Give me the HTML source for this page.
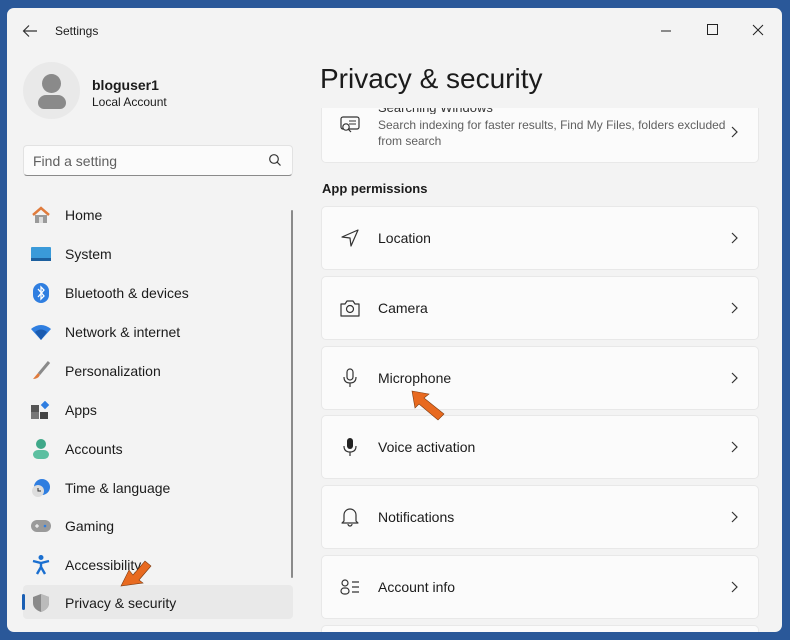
<!DOCTYPE html>
<html><head><meta charset="utf-8"><style>
*{margin:0;padding:0;box-sizing:border-box}
body{width:790px;height:640px;background:#2a5899;font-family:"Liberation Sans",sans-serif;overflow:hidden;position:relative}
.win{position:absolute;left:7px;top:8px;width:775px;height:624px;background:#f3f3f3;border-radius:7px;overflow:hidden}
.abs{position:absolute}
.t{color:#1b1b1b}
.nav{position:absolute;left:16px;height:35px;width:270px;display:flex;align-items:center;font-size:14px;color:#1b1b1b}
.nav .ic{width:20px;height:20px;margin-left:8px;margin-right:14px;display:flex;align-items:center;justify-content:center}
.card{position:absolute;left:314px;width:438px;height:64px;background:#fbfbfb;border:1px solid #e8e8e8;border-radius:5px;display:flex;align-items:center;font-size:14px;color:#1b1b1b}
.card .ic{width:56px;display:flex;justify-content:center}
.chev{position:absolute;right:17px;top:50%;margin-top:-7px;width:14px;height:14px}
</style></head><body>
<div class="win">
<svg class="abs" style="left:15px;top:16px" width="16" height="14" viewBox="0 0 16 14"><path d="M15 7H2M7 1.5L1.5 7 7 12.5" stroke="#333" stroke-width="1.2" fill="none"/></svg>
<div class="abs t" style="left:48px;top:16px;font-size:12px">Settings</div>
<svg class="abs" style="left:634px;top:10px" width="140" height="22"><path d="M20 13h10" stroke="#222"/><rect x="66.5" y="6.5" width="10" height="10" fill="none" stroke="#222"/><path d="M112 7l10 10M122 7l-10 10" stroke="#222"/></svg>
<div class="abs" style="left:16px;top:54px;width:57px;height:57px;border-radius:50%;background:#e9e9e9"></div>
<div class="abs" style="left:35px;top:66px;width:19px;height:19px;border-radius:50%;background:#8a8a8a"></div>
<div class="abs" style="left:31px;top:87px;width:28px;height:14px;border-radius:8px 8px 6px 6px;background:#8a8a8a"></div>
<div class="abs t" style="left:85px;top:69px;font-size:14px;font-weight:bold">bloguser1</div>
<div class="abs t" style="left:85px;top:87px;font-size:12px">Local Account</div>
<div class="abs" style="left:16px;top:137px;width:270px;height:31px;background:#fbfbfb;border:1px solid #e2e2e2;border-bottom:1px solid #8a8a8a;border-radius:4px"></div>
<div class="abs" style="left:26px;top:145px;font-size:14px;color:#5f5f5f">Find a setting</div>
<svg class="abs" style="left:261px;top:145px" width="14" height="14"><circle cx="6" cy="6" r="4.3" stroke="#333" fill="none" stroke-width="1.2"/><path d="M9 9l3.5 3.5" stroke="#333" stroke-width="1.2"/></svg>
<div class="abs" style="left:284px;top:202px;width:2px;height:368px;background:#8a8a8a;border-radius:1px"></div>

<div class="nav" style="top:189px"><span class="ic"><svg width="20" height="18"><path d="M2 9L10 2l8 7" stroke="#e07b3c" stroke-width="2.5" fill="none"/><path d="M4 9v8h12V9" fill="#9a9a9a"/><rect x="8" y="11" width="4" height="6" fill="#ddd"/></svg></span>Home</div>
<div class="nav" style="top:228px"><span class="ic"><svg width="20" height="14"><rect width="20" height="14" rx="1" fill="#3a9ad9"/><rect y="11" width="20" height="3" fill="#1c5f9e"/></svg></span>System</div>
<div class="nav" style="top:267px"><span class="ic"><svg width="16" height="20"><rect width="16" height="20" rx="8" fill="#2f7ee0"/><path d="M5 6l6 7-3 3V4l3 3-6 7" stroke="#fff" stroke-width="1.3" fill="none"/></svg></span>Bluetooth &amp; devices</div>
<div class="nav" style="top:306px"><span class="ic"><svg width="20" height="16"><path d="M0 5Q10-3 20 5L10 16z" fill="#2f7ee0"/><path d="M4 8Q10 3 16 8L10 16z" fill="#1a5bb0"/></svg></span>Network &amp; internet</div>
<div class="nav" style="top:345px"><span class="ic"><svg width="20" height="20"><path d="M18 1L8 13" stroke="#8a8a8a" stroke-width="3"/><path d="M7 12l-5 6q5 0 7-4z" fill="#e07b3c"/></svg></span>Personalization</div>
<div class="nav" style="top:384px"><span class="ic"><svg width="20" height="18"><rect x="0" y="4" width="8" height="7" fill="#555"/><rect x="0" y="11" width="8" height="7" fill="#777"/><rect x="9" y="11" width="8" height="7" fill="#444"/><rect x="11" y="1" width="6" height="6" fill="#2f7ee0" transform="rotate(45 14 4)"/></svg></span>Apps</div>
<div class="nav" style="top:423px"><span class="ic"><svg width="18" height="20"><circle cx="9" cy="5" r="5" fill="#3fa889"/><rect x="1" y="11" width="16" height="9" rx="5" fill="#5cbfa0"/></svg></span>Accounts</div>
<div class="nav" style="top:462px"><span class="ic"><svg width="20" height="20"><circle cx="11" cy="9" r="8" fill="#2f7ee0"/><circle cx="7" cy="13" r="6" fill="#ddd"/><path d="M7 10v3h3" stroke="#333" fill="none"/></svg></span>Time &amp; language</div>
<div class="nav" style="top:500px"><span class="ic"><svg width="20" height="12"><rect width="20" height="12" rx="6" fill="#9a9a9a"/><path d="M4 6h4M6 4v4" stroke="#fff"/><circle cx="14" cy="6" r="1.3" fill="#2f7ee0"/></svg></span>Gaming</div>
<div class="nav" style="top:539px"><span class="ic"><svg width="18" height="20"><circle cx="9" cy="2.5" r="2.5" fill="#1a6fd0"/><path d="M1 6l8 2 8-2M9 8v4l-4 7M9 12l4 7" stroke="#1a6fd0" stroke-width="2.4" fill="none"/></svg></span>Accessibility</div>
<div class="abs" style="left:16px;top:577px;width:270px;height:34px;background:#e9e9e9;border-radius:4px"></div>
<div class="abs" style="left:15px;top:586px;width:3px;height:16px;background:#1a5fb4;border-radius:2px"></div>
<div class="nav" style="top:577px"><span class="ic"><svg width="18" height="20"><path d="M9 1l8 3v6q0 6-8 9-8-3-8-9V4z" fill="#8a8a8a"/><path d="M9 1l8 3v6q0 6-8 9z" fill="#bbb"/></svg></span>Privacy &amp; security</div>
<svg class="abs" style="left:108px;top:548px" width="40" height="34"><path d="M6 30L14 14 18 19 30 5 36 10 24 24 28 27z" fill="#e86a20" stroke="#7a3a10" stroke-width=".6"/></svg>

<div class="abs t" style="left:313px;top:55px;font-size:28px">Privacy &amp; security</div>
<div class="card" style="top:100px;height:55px;border-top:none;border-radius:0 0 5px 5px;align-items:flex-start">
<div class="abs" style="left:56px;top:0px;font-size:13px;color:#333;height:6px;overflow:hidden;line-height:14px"><span style="position:relative;top:-7px">Searching Windows</span></div>
<svg class="abs" style="left:18px;top:8px" width="20" height="18"><rect x="1" y="1" width="18" height="12" rx="2" stroke="#333" fill="none" stroke-width="1.2"/><path d="M9 5h7M9 8h7" stroke="#333"/><circle cx="6" cy="11" r="3.2" stroke="#333" fill="#fbfbfb" stroke-width="1.2"/><path d="M8 13l3 3" stroke="#333" stroke-width="1.2"/></svg>
<div class="abs" style="left:56px;top:10px;font-size:12px;color:#5f5f5f;line-height:15.5px;width:350px">Search indexing for faster results, Find My Files, folders excluded from search</div>
<svg class="chev" style="top:17px;margin-top:0" viewBox="0 0 14 14"><path d="M5 2l5 5-5 5" stroke="#333" fill="none" stroke-width="1.2"/></svg></div>
<div class="abs t" style="left:315px;top:173px;font-size:13px;font-weight:bold">App permissions</div>

<div class="card" style="top:198px"><span class="ic"><svg width="20" height="20"><path d="M18 2L2 9l8 1 1 8z" stroke="#333" fill="none" stroke-width="1.2" stroke-linejoin="round"/></svg></span>Location<svg class="chev" viewBox="0 0 14 14"><path d="M5 2l5 5-5 5" stroke="#333" fill="none" stroke-width="1.2"/></svg></div>
<div class="card" style="top:268px"><span class="ic"><svg width="20" height="18"><path d="M1 5h4l2-3h6l2 3h4v12H1z" stroke="#333" fill="none" stroke-width="1.2" stroke-linejoin="round"/><circle cx="10" cy="10" r="3.5" stroke="#333" fill="none" stroke-width="1.2"/></svg></span>Camera<svg class="chev" viewBox="0 0 14 14"><path d="M5 2l5 5-5 5" stroke="#333" fill="none" stroke-width="1.2"/></svg></div>
<div class="card" style="top:338px"><span class="ic"><svg width="16" height="20"><rect x="5" y="1" width="6" height="11" rx="3" stroke="#333" fill="none" stroke-width="1.2"/><path d="M2 9q0 6 6 6t6-6M8 15v4" stroke="#333" fill="none" stroke-width="1.2"/></svg></span>Microphone<svg class="chev" viewBox="0 0 14 14"><path d="M5 2l5 5-5 5" stroke="#333" fill="none" stroke-width="1.2"/></svg></div>
<div class="card" style="top:407px"><span class="ic"><svg width="16" height="20"><rect x="5" y="1" width="6" height="11" rx="3" fill="#222"/><path d="M2 9q0 6 6 6t6-6M8 15v4" stroke="#333" fill="none" stroke-width="1.2"/></svg></span>Voice activation<svg class="chev" viewBox="0 0 14 14"><path d="M5 2l5 5-5 5" stroke="#333" fill="none" stroke-width="1.2"/></svg></div>
<div class="card" style="top:477px"><span class="ic"><svg width="20" height="20"><path d="M4 14V8a6 6 0 0112 0v6l2 2H2z" stroke="#333" fill="none" stroke-width="1.2" stroke-linejoin="round"/><path d="M8 17a2 2 0 004 0" stroke="#333" fill="none" stroke-width="1.2"/></svg></span>Notifications<svg class="chev" viewBox="0 0 14 14"><path d="M5 2l5 5-5 5" stroke="#333" fill="none" stroke-width="1.2"/></svg></div>
<div class="card" style="top:547px"><span class="ic"><svg width="20" height="16"><circle cx="5" cy="4" r="3" stroke="#333" fill="none" stroke-width="1.2"/><rect x="1" y="9" width="8" height="6" rx="3" stroke="#333" fill="none" stroke-width="1.2"/><path d="M12 3h7M12 8h7M12 13h7" stroke="#333" stroke-width="1.2"/></svg></span>Account info<svg class="chev" viewBox="0 0 14 14"><path d="M5 2l5 5-5 5" stroke="#333" fill="none" stroke-width="1.2"/></svg></div>
<div class="card" style="top:617px;height:7px;border-bottom:none;border-radius:5px 5px 0 0"></div>
<svg class="abs" style="left:400px;top:378px" width="42" height="38"><path d="M5 5L22 8 17 12 37 28 31 34 12 18 8 22z" fill="#e86a20" stroke="#7a3a10" stroke-width=".6"/></svg>
</div>
</body></html>
